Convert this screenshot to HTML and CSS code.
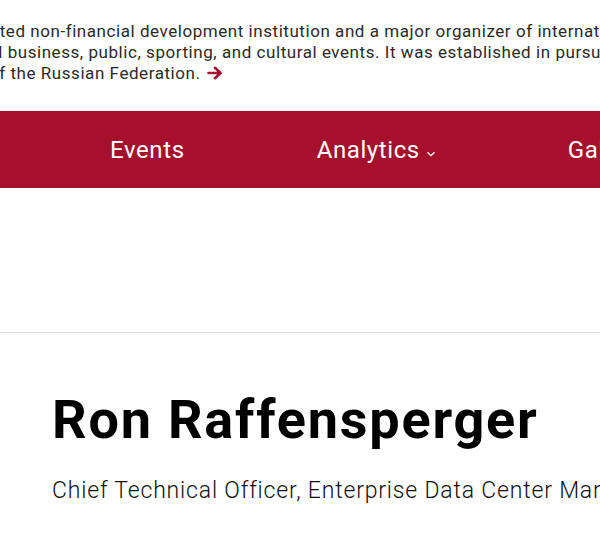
FILE: index.html
```html
<!DOCTYPE html>
<html lang="en">
<head>
<meta charset="utf-8">
<title>Ron Raffensperger</title>
<link rel="stylesheet" href="styles.css">
</head>
<body>
<header class="intro">
  <p class="intro-text">
    <span class="line l1">oriented non-financial development institution and a major organizer of international congresses,</span>
    <span class="line l2">and business, public, sporting, and cultural events. It was established in pursuance of a decision</span>
    <span class="line l3">of the Russian Federation. <svg class="arrow" viewBox="0 0 16 14" width="16" height="14" aria-hidden="true"><path d="M1.5 7H13M8 1.8L13.5 7L8 12.2" fill="none" stroke="#a6102c" stroke-width="2.6" stroke-linecap="round" stroke-linejoin="round"/></svg></span>
  </p>
</header>
<nav class="menu">
  <a class="menu-item">Events</a>
  <a class="menu-item">Analytics<svg class="chev" viewBox="0 0 10 6" width="10" height="6" aria-hidden="true"><path d="M1.5 1.2L5 4.6L8.5 1.2" fill="none" stroke="#fff" stroke-width="1.3"/></svg></a>
  <a class="menu-item">Gallery</a>
  <a class="menu-item">Media</a>
</nav>
<div class="spacer"></div>
<main class="person">
  <h1 class="name">Ron Raffensperger</h1>
  <p class="role">Chief Technical Officer, Enterprise Data Center Market</p>
</main>
</body>
</html>
```

FILE: styles.css
```css
html, body {
  margin: 0;
  padding: 0;
  background: #fff;
  overflow: hidden;
}
body {
  width: 600px;
  height: 549px;
  font-family: Roboto, "Liberation Sans", sans-serif;
  color: #222;
}
.intro {
  padding-top: 21px;
  height: 90px;
  overflow: hidden;
}
.intro-text {
  margin: 0;
  display: flex;
  flex-direction: column;
  font-size: 17px;
  line-height: 21px;
  letter-spacing: 0.55px;
  color: #2a2a2a;
}
.line {
  white-space: nowrap;
}
.l1 { margin-left: -41px; }
.l2 { margin-left: -27px; }
.l3 { margin-left: -11px; }
.arrow {
  vertical-align: -1px;
  margin-left: 2px;
}
.menu {
  height: 77px;
  background: #a6102c;
  display: flex;
  align-items: center;
  gap: 132px;
  padding-left: 110px;
  white-space: nowrap;
  overflow: hidden;
}
.menu-item {
  color: #fff;
  font-size: 24px;
  letter-spacing: 0.6px;
  display: flex;
  align-items: center;
}
.chev {
  margin-left: 6px;
  margin-top: 9px;
}
.spacer {
  height: 144px;
  border-bottom: 1px solid #ddd;
}
.person {
  padding-left: 52px;
  padding-top: 56px;
}
.name {
  margin: 0;
  font-size: 54px;
  line-height: 62px;
  letter-spacing: 1.8px;
  font-weight: 700;
  color: #000;
  white-space: nowrap;
}
.role {
  margin: 25px 0 0;
  font-size: 23px;
  line-height: 29px;
  letter-spacing: 0.82px;
  font-weight: 300;
  color: #111;
  white-space: nowrap;
}
```
